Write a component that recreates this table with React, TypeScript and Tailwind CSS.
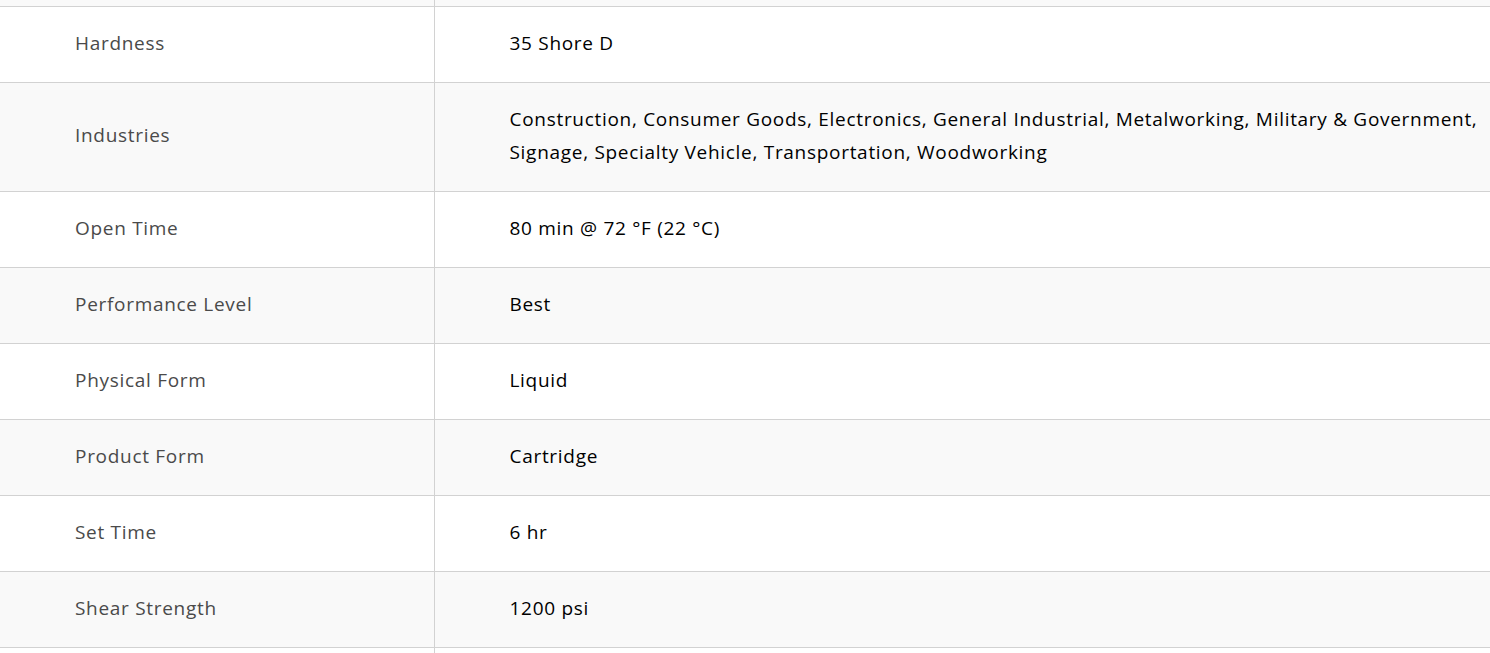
const rows: [string, string][] = [
  ["Hardness", "35 Shore D"],
  [
    "Industries",
    "Construction, Consumer Goods, Electronics, General Industrial, Metalworking, Military & Government, Signage, Specialty Vehicle, Transportation, Woodworking",
  ],
  ["Open Time", "80 min @ 72 °F (22 °C)"],
  ["Performance Level", "Best"],
  ["Physical Form", "Liquid"],
  ["Product Form", "Cartridge"],
  ["Set Time", "6 hr"],
  ["Shear Strength", "1200 psi"],
];

export default function App() {
  return (
    <div className="h-[653px] w-[1490px] overflow-hidden bg-white font-['Open_Sans',sans-serif] text-[19px] leading-[33px] tracking-[0.7px]">
      <table className="w-full border-collapse">
        <tbody>
          {/* tail of the row above, scrolled out of view */}
          <tr className="h-[6px] bg-[#f9f9f9]">
            <td className="w-[434px] border-r border-b border-[#d2d2d2] p-0" />
            <td className="border-b border-[#d2d2d2] p-0" />
          </tr>
          {rows.map(([label, value], i) => (
            <tr
              key={label}
              className={i % 2 === 0 ? "bg-white" : "bg-[#f9f9f9]"}
            >
              <td className="w-[434px] border-y border-r border-[#d2d2d2] pt-[20px] pb-[22px] pl-[75px] align-middle text-[#4a4a4a]">
                {label}
              </td>
              <td className="border-y border-[#d2d2d2] pt-[20px] pb-[22px] pl-[75px] pr-[8px] align-middle text-black">
                {value}
              </td>
            </tr>
          ))}
          <tr className="h-[20px] bg-white">
            <td className="w-[434px] border-r border-t border-[#d2d2d2] p-0" />
            <td className="border-t border-[#d2d2d2] p-0" />
          </tr>
        </tbody>
      </table>
    </div>
  );
}
